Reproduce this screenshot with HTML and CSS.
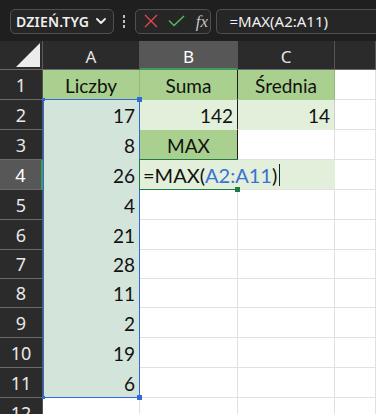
FILE: index.html
```html
<!DOCTYPE html>
<html lang="pl">
<head>
<meta charset="utf-8">
<title>Excel</title>
<link rel="stylesheet" href="styles.css">
</head>
<body>
<div class="toolbar">
  <div class="namebox">
    <span class="name">DZIEŃ.TYG</span>
    <svg class="chev" width="10" height="6" viewBox="0 0 10 6"><polyline points="1,1 5,5 9,1" fill="none" stroke="#f0f0f0" stroke-width="1.8" stroke-linecap="round" stroke-linejoin="round"/></svg>
  </div>
  <div class="vdots"><i></i><i></i><i></i></div>
  <div class="btns">
    <svg width="14" height="14" viewBox="0 0 14 14"><path d="M1 1 L13 13 M13 1 L1 13" stroke="#e0474c" stroke-width="1.4" fill="none"/></svg>
    <svg width="17" height="12" viewBox="0 0 17 12"><polyline points="1,5.5 6,10.5 16,1" stroke="#4fbf5c" stroke-width="1.4" fill="none"/></svg>
    <span class="fx">fx</span>
  </div>
  <div class="formula">=MAX(A2:A11)</div>
</div>
<div class="sheet">
  <div class="corner"><span class="tri"></span></div>
  <div class="ch">A</div>
  <div class="ch ch-sel">B</div>
  <div class="ch">C</div>
  <div class="ch"></div>

  <div class="rh">1</div>
  <div class="c g1 center">Liczby</div>
  <div class="c g1 center bdark">Suma</div>
  <div class="c g1 center">Średnia</div>
  <div class="c"></div>

  <div class="rh">2</div>
  <div class="c sel num">17</div>
  <div class="c g2 num bdark">142</div>
  <div class="c g2 num">14</div>
  <div class="c"></div>

  <div class="rh">3</div>
  <div class="c sel num">8</div>
  <div class="c g1 center bdark">MAX</div>
  <div class="c"></div>
  <div class="c"></div>

  <div class="rh rh-sel">4</div>
  <div class="c sel num">26</div>
  <div class="c edit"><span class="edit-text">=MAX(<span class="ref">A2:A11</span>)</span><span class="caret"></span></div>
  <div class="c"></div>

  <div class="rh">5</div>
  <div class="c sel num">4</div>
  <div class="c"></div><div class="c"></div><div class="c"></div>

  <div class="rh">6</div>
  <div class="c sel num">21</div>
  <div class="c"></div><div class="c"></div><div class="c"></div>

  <div class="rh">7</div>
  <div class="c sel num">28</div>
  <div class="c"></div><div class="c"></div><div class="c"></div>

  <div class="rh">8</div>
  <div class="c sel num">11</div>
  <div class="c"></div><div class="c"></div><div class="c"></div>

  <div class="rh">9</div>
  <div class="c sel num">2</div>
  <div class="c"></div><div class="c"></div><div class="c"></div>

  <div class="rh">10</div>
  <div class="c sel num">19</div>
  <div class="c"></div><div class="c"></div><div class="c"></div>

  <div class="rh">11</div>
  <div class="c sel num">6</div>
  <div class="c"></div><div class="c"></div><div class="c"></div>

  <div class="rh">12</div>
  <div class="c"></div><div class="c"></div><div class="c"></div><div class="c"></div>

  <div class="range-box">
    <i class="h tl"></i><i class="h tr"></i><i class="h bl"></i><i class="h br"></i>
  </div>
  <div class="active-box"><i class="fill-handle"></i></div>
</div>
</body>
</html>
```

FILE: styles.css
```css
* { box-sizing: border-box; }
html, body { margin: 0; padding: 0; }
body {
  width: 376px;
  height: 414px;
  overflow: hidden;
  background: #1f1f1f;
  font-family: Lato, "Noto Sans", sans-serif;
}

/* toolbar */
.toolbar {
  height: 41px;
  display: flex;
  align-items: center;
  padding: 1px 0 0 10px;
  background: #1f1f1f;
  font-family: "Noto Sans", "Open Sans", sans-serif;
  color: #f0f0f0;
}
.namebox {
  width: 110px;
  height: 25px;
  border: 1px solid #505050;
  border-radius: 5px;
  background: #262626;
  display: flex;
  align-items: center;
  justify-content: space-between;
  padding: 0 7px 0 5px;
}
.name {
  font-size: 14px;
  font-weight: 600;
  letter-spacing: 0.2px;
}
.vdots {
  width: 22px;
  display: flex;
  flex-direction: column;
  align-items: center;
  gap: 2px;
}
.vdots i {
  width: 2px;
  height: 3px;
  background: #bdbdbd;
  display: block;
}
.btns {
  width: 80px;
  height: 25px;
  border: 1px solid #505050;
  border-radius: 5px;
  background: #262626;
  display: flex;
  align-items: center;
  padding: 0 0 0 8px;
  gap: 10px;
}
.fx {
  font-family: "Liberation Serif", serif;
  font-style: italic;
  font-size: 17px;
  color: #c4c4c4;
  margin-left: 1px;
  line-height: 1;
}
.formula {
  margin-left: 5px;
  width: 170px;
  height: 25px;
  border: 1px solid #505050;
  border-right: none;
  border-radius: 5px 0 0 5px;
  background: #262626;
  display: flex;
  align-items: center;
  padding-left: 13px;
  font-size: 15px;
}

/* sheet grid */
.sheet {
  position: relative;
  display: grid;
  grid-template-columns: 43px 97px 98px 97px 41px;
  grid-template-rows: 29px 30px 30px 30px 30px 30px 30px 29px 29px 30px 30px 30px 30px;
  background: #ffffff;
}
.corner {
  background: #2b2b2b;
  border-right: 1px solid #5a5a5a;
  border-bottom: 1px solid #6a6a6a;
  position: relative;
}
.tri {
  position: absolute;
  right: 2px;
  bottom: 2px;
  width: 0;
  height: 0;
  border-left: 24px solid transparent;
  border-bottom: 24px solid #ececec;
}
.ch {
  background: #2b2b2b;
  color: #e4e4e4;
  font-family: "Noto Sans", "Open Sans", sans-serif;
  font-size: 17px;
  display: flex;
  align-items: center;
  justify-content: center;
  padding-top: 3px;
  border-right: 1px solid #555555;
  border-bottom: 1px solid #6a6a6a;
}
.ch-sel {
  background: #575757;
  color: #ffffff;
  border-bottom: 2px solid #3f9b5a;
}
.rh {
  background: #2b2b2b;
  color: #e8e8e8;
  font-family: "Noto Sans", "Open Sans", sans-serif;
  font-size: 18px;
  display: flex;
  align-items: center;
  justify-content: center;
  border-right: 1px solid #555555;
  border-bottom: 1px solid #6a6a6a;
}
.rh-sel {
  background: #575757;
  color: #ffffff;
  border-right: 2px solid #3f9b5a;
}
.c {
  font-size: 19px;
  color: #111111;
  display: flex;
  align-items: center;
  border-right: 1px solid #e1e1e1;
  border-bottom: 1px solid #e1e1e1;
  padding: 1px 4px 0 4px;
  white-space: nowrap;
}
.center { justify-content: center; }
.num { justify-content: flex-end; }
.g1 {
  background: #a9d08e;
  border-right-color: #94b87b;
  border-bottom-color: #a9d08e;
}
.g2 {
  background: #e2efda;
  border-right-color: #d0d0d0;
  border-bottom-color: #e2efda;
}
.bdark { border-right-color: #1f1f1f; }
.sel {
  background: #d3e4db;
  border-right-color: #d3e4db;
  border-bottom-color: #d3e4db;
}
.edit {
  grid-column: span 2;
  background: #e2efda;
  border-right-color: #e2efda;
  padding-left: 3px;
  font-size: 20px;
  overflow: visible;
}
.edit-text { color: #111111; }
.ref { color: #3a72d4; }
.caret {
  width: 1px;
  height: 22px;
  background: #222222;
  margin-left: 2px;
}

/* overlays */
.range-box {
  position: absolute;
  left: 43px;
  top: 58px;
  width: 97px;
  height: 299px;
  border: 1px solid #2f6ad6;
}
.h {
  position: absolute;
  width: 5px;
  height: 5px;
  background: #2f6ad6;
}
.tl { width: 3px; height: 3px; left: -2px; top: -2px; }
.tr { right: -3px; top: -3px; }
.bl { left: -2px; bottom: -2px; width: 3px; height: 3px; }
.br { right: -3px; bottom: -3px; }
.active-box {
  position: absolute;
  left: 139px;
  top: 118px;
  width: 99px;
  height: 31px;
  border: 1px solid #1f7a45;
  border-right: none;
}
.fill-handle {
  position: absolute;
  right: -2px;
  bottom: -3px;
  width: 5px;
  height: 5px;
  background: #1f7a45;
}
```
